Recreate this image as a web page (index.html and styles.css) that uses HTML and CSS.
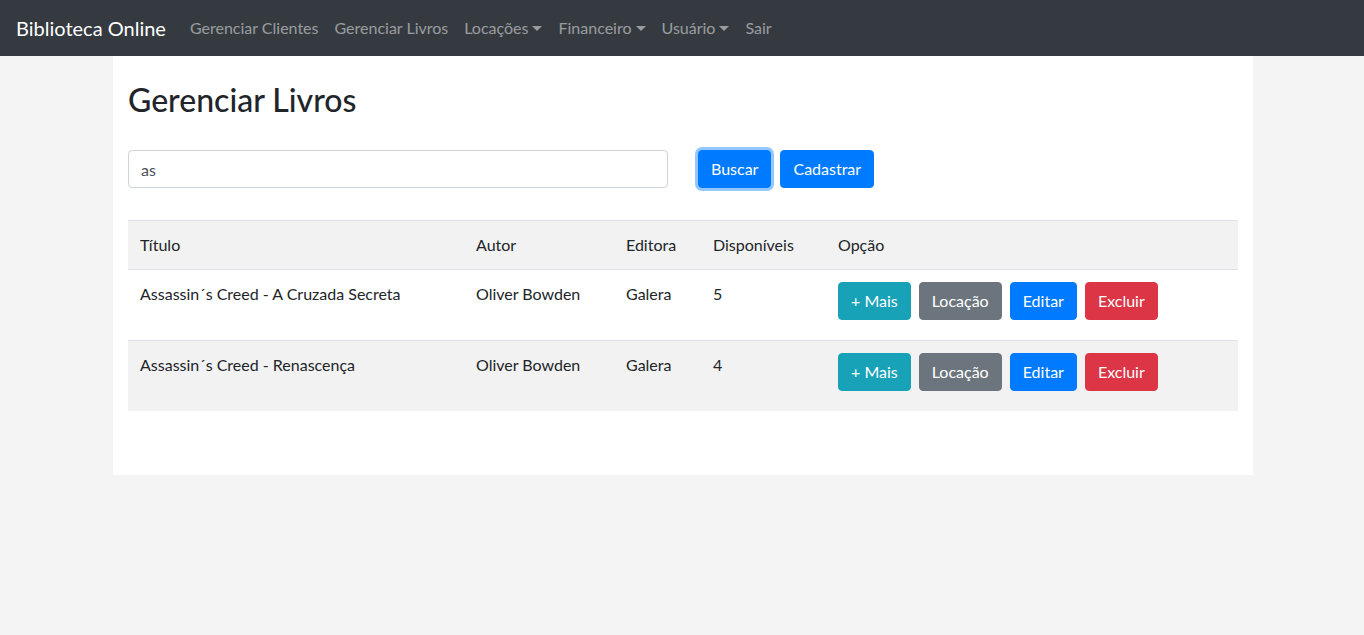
FILE: index.html
```html
<!DOCTYPE html>
<html lang="pt-BR">
<head>
<meta charset="utf-8">
<title>Biblioteca Online</title>
<link rel="stylesheet" href="styles.css">
</head>
<body>
<nav class="navbar">
  <a class="brand" href="#">Biblioteca Online</a>
  <ul class="nav">
    <li><a class="nav-link" href="#">Gerenciar Clientes</a></li>
    <li><a class="nav-link" href="#">Gerenciar Livros</a></li>
    <li><a class="nav-link dropdown" href="#">Locações</a></li>
    <li><a class="nav-link dropdown" href="#">Financeiro</a></li>
    <li><a class="nav-link dropdown" href="#">Usuário</a></li>
    <li><a class="nav-link" href="#">Sair</a></li>
  </ul>
</nav>
<main class="container">
  <h2 class="title">Gerenciar Livros</h2>
  <form class="search-row">
    <div class="search-col">
      <input class="form-control" type="text" value="as">
    </div>
    <div class="actions-col">
      <button type="button" class="btn btn-primary focus">Buscar</button>
      <button type="button" class="btn btn-primary">Cadastrar</button>
    </div>
  </form>
  <table class="table">
    <colgroup>
      <col class="c-titulo"><col class="c-autor"><col class="c-editora"><col class="c-disp"><col class="c-opcao">
    </colgroup>
    <thead>
      <tr><th>Título</th><th>Autor</th><th>Editora</th><th>Disponíveis</th><th>Opção</th></tr>
    </thead>
    <tbody>
      <tr>
        <td>Assassin´s Creed - A Cruzada Secreta</td>
        <td>Oliver Bowden</td>
        <td>Galera</td>
        <td>5</td>
        <td><div class="btn-group">
          <button type="button" class="btn btn-info">+ Mais</button>
          <button type="button" class="btn btn-secondary">Locação</button>
          <button type="button" class="btn btn-primary">Editar</button>
          <button type="button" class="btn btn-danger">Excluir</button>
        </div></td>
      </tr>
      <tr class="striped">
        <td>Assassin´s Creed - Renascença</td>
        <td>Oliver Bowden</td>
        <td>Galera</td>
        <td>4</td>
        <td><div class="btn-group">
          <button type="button" class="btn btn-info">+ Mais</button>
          <button type="button" class="btn btn-secondary">Locação</button>
          <button type="button" class="btn btn-primary">Editar</button>
          <button type="button" class="btn btn-danger">Excluir</button>
        </div></td>
      </tr>
    </tbody>
  </table>
</main>
</body>
</html>
```
FILE: styles.css
```css
* { box-sizing: border-box; }
html, body { margin: 0; padding: 0; }
body {
  background: #f4f4f4;
  font-family: Lato, "Noto Sans", sans-serif;
  font-size: 16px;
  line-height: 1.5;
  color: #212529;
}
.navbar {
  display: flex;
  align-items: center;
  height: 56px;
  padding: 8px 16px;
  background: #343a40;
}
.brand {
  color: #fff;
  text-decoration: none;
  font-size: 20px;
  line-height: 30px;
  padding: 5px 0;
  margin-right: 16px;
}
.nav {
  display: flex;
  list-style: none;
  margin: 0;
  padding: 0;
}
.nav-link {
  display: block;
  padding: 8px 8px;
  color: rgba(255, 255, 255, 0.5);
  text-decoration: none;
  line-height: 24px;
}
.dropdown::after {
  content: "";
  display: inline-block;
  margin-left: 4px;
  vertical-align: 3px;
  border-top: 5px solid;
  border-left: 5px solid transparent;
  border-right: 5px solid transparent;
}
.container {
  width: 1140px;
  margin: 0 0 0 calc(50% - 569px);
  background: #fff;
  padding: 25px 15px 48px;
}
.title {
  margin: 0 0 31px;
  font-size: 32px;
  font-weight: 500;
  line-height: 38px;
}
.search-row {
  display: flex;
  margin: 0 -15px 32px;
}
.search-col {
  width: 570px;
  padding: 0 15px;
}
.actions-col {
  display: flex;
  gap: 9px;
  padding: 0 15px;
}
.form-control {
  display: block;
  width: 100%;
  height: 38px;
  padding: 6px 12px;
  font: inherit;
  color: #495057;
  background: #fff;
  border: 1px solid #ced4da;
  border-radius: 4px;
}
.btn {
  display: inline-block;
  font: inherit;
  line-height: 24px;
  padding: 6px 12px;
  border: 1px solid transparent;
  border-radius: 4px;
  color: #fff;
  cursor: pointer;
}
.btn-primary { background: #007bff; border-color: #007bff; }
.btn-info { background: #17a2b8; border-color: #17a2b8; }
.btn-secondary { background: #6c757d; border-color: #6c757d; }
.btn-danger { background: #dc3545; border-color: #dc3545; }
.btn.focus { box-shadow: 0 0 0 3px rgba(38, 143, 255, 0.5); }
.table {
  width: 100%;
  table-layout: fixed;
  border-collapse: collapse;
  margin-bottom: 16px;
}
.c-titulo { width: 336px; }
.c-autor { width: 150px; }
.c-editora { width: 87px; }
.c-disp { width: 125px; }
.table th, .table td {
  padding: 12px;
  text-align: left;
  vertical-align: top;
  border-top: 1px solid #dee2e6;
  font-weight: 400;
}
.table thead th {
  background: #f2f2f2;
  border-bottom: 1px solid #dee2e6;
}
.table tr.striped td { background: #f2f2f2; }
.btn-group {
  display: flex;
  gap: 8px;
  margin-bottom: 8px;
}
```
